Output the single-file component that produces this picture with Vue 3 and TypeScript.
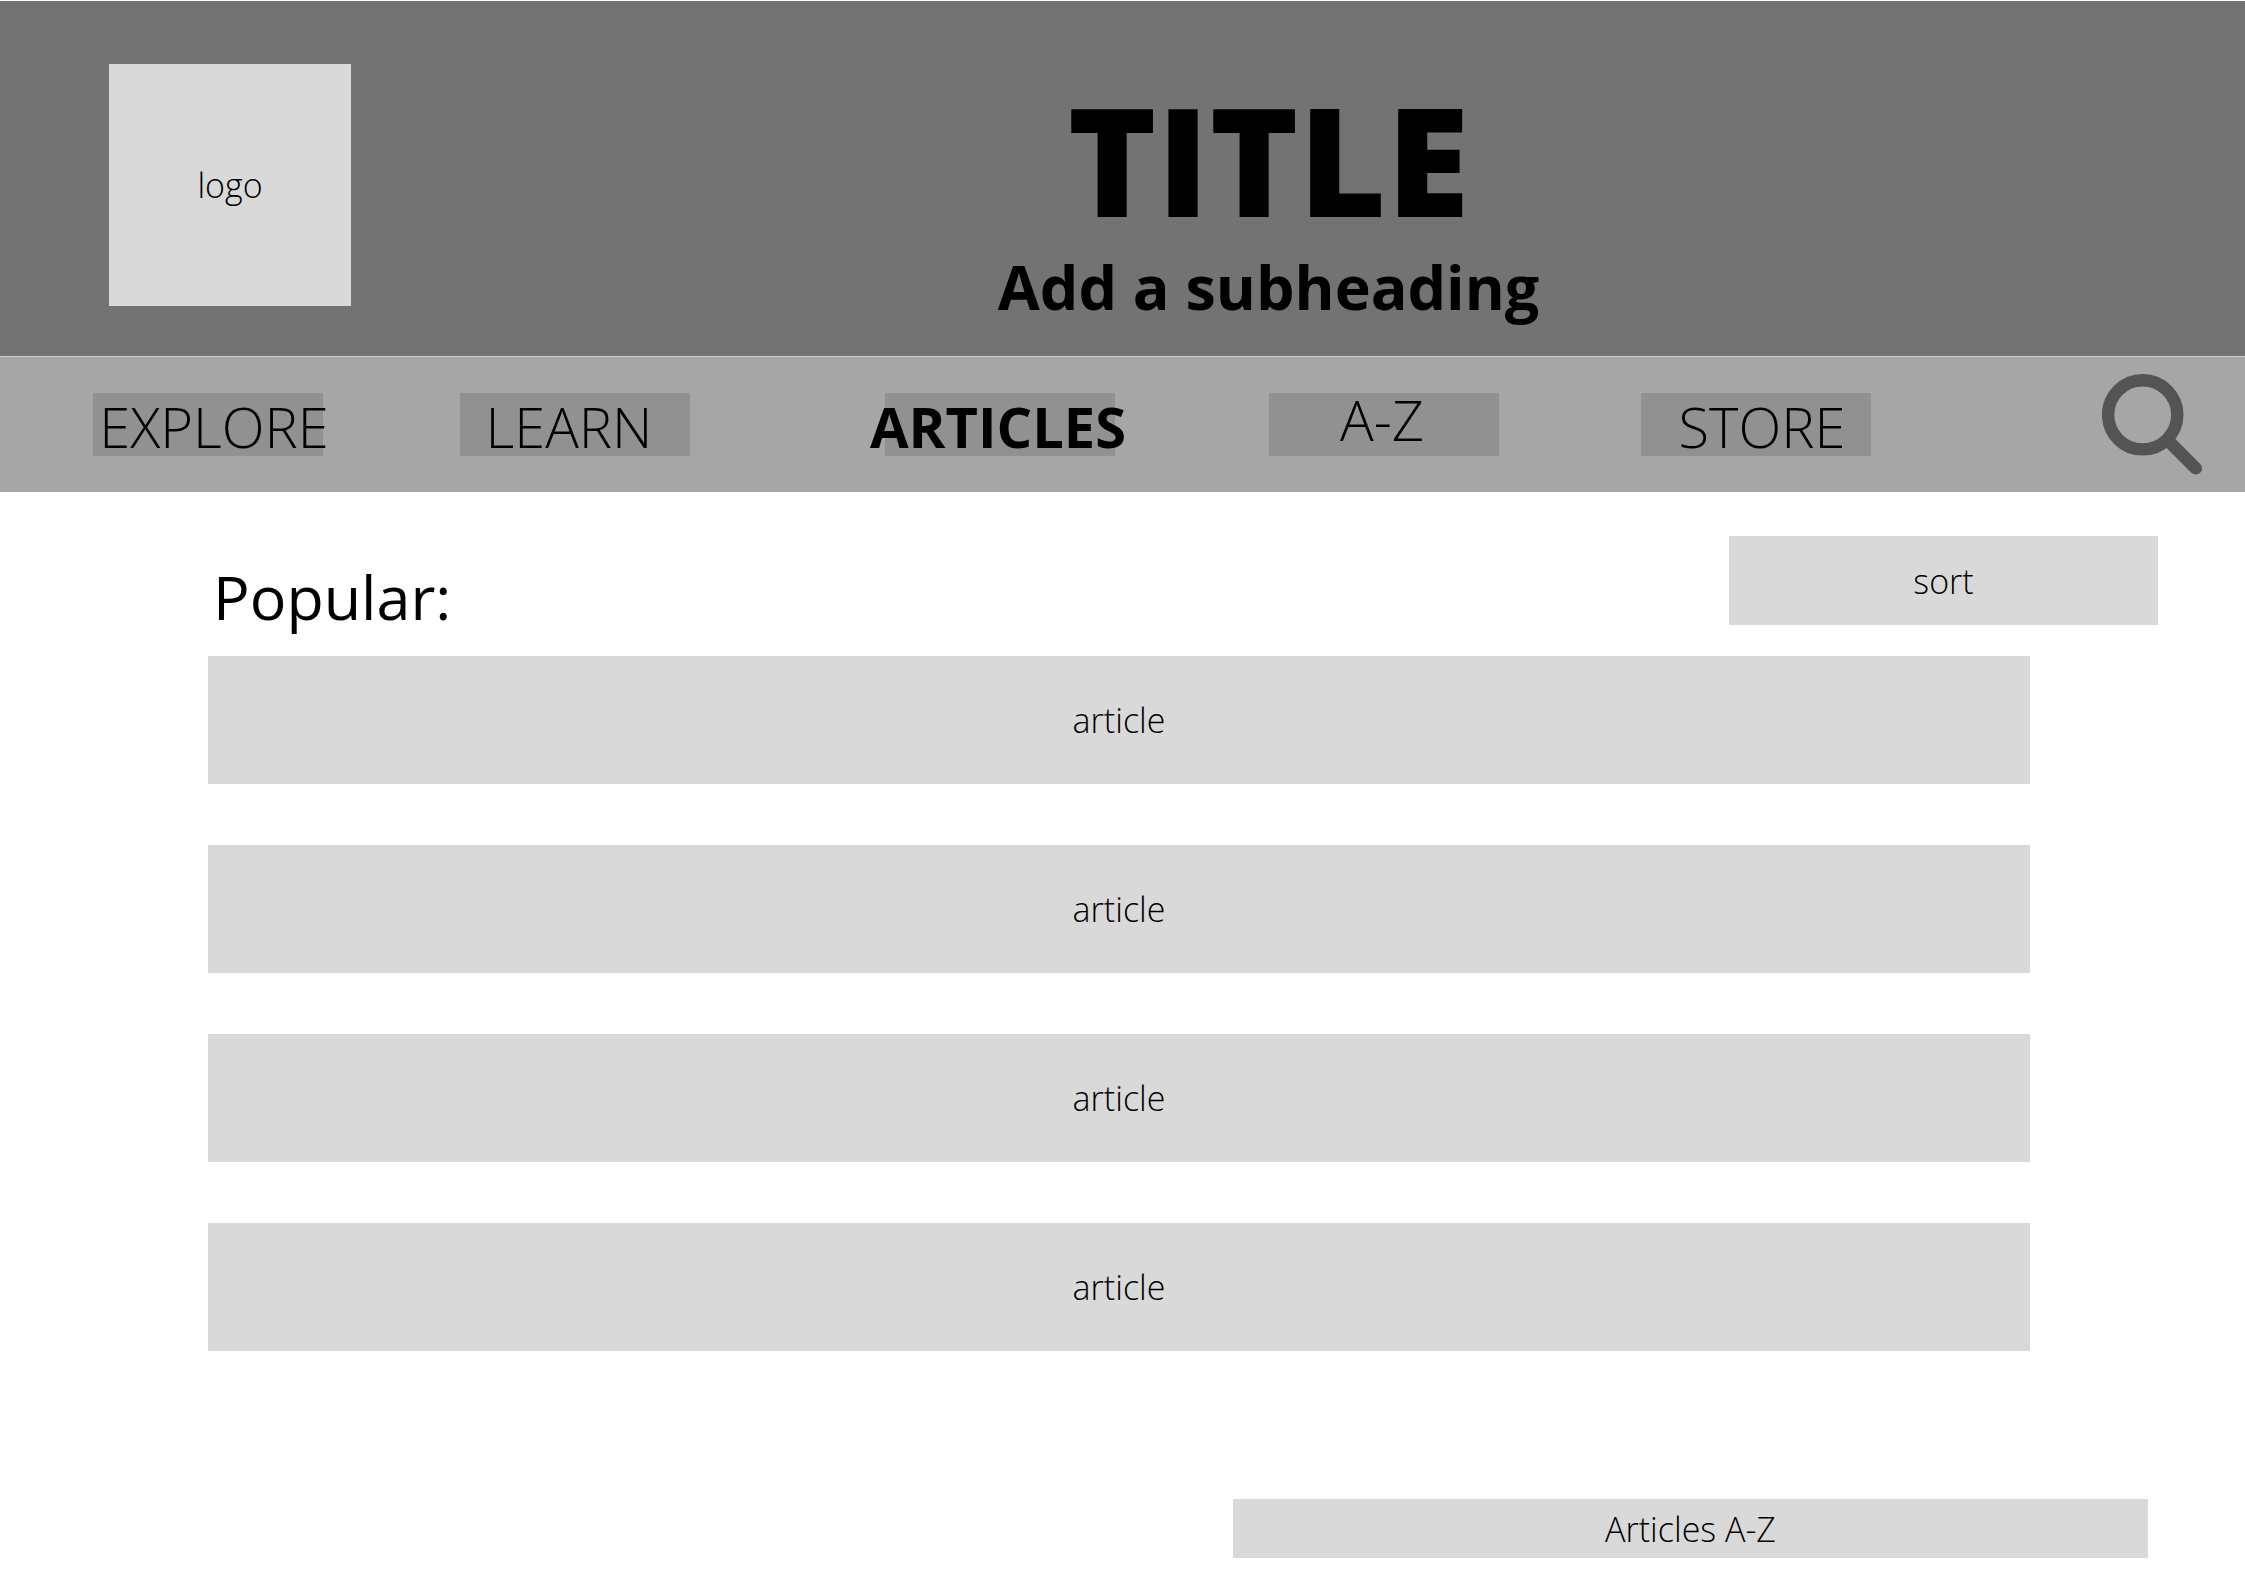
<script setup lang="ts">
interface NavItem {
  label: string
  href: string
  lean: 'left' | 'slight' | 'right'
  current?: boolean
  raised?: boolean
}

const navItems: NavItem[] = [
  { label: 'EXPLORE', href: '#explore', lean: 'right' },
  { label: 'LEARN', href: '#learn', lean: 'left' },
  { label: 'ARTICLES', href: '#articles', lean: 'slight', current: true },
  { label: 'A-Z', href: '#a-z', lean: 'slight', raised: true },
  { label: 'STORE', href: '#store', lean: 'right' },
]

const articles: string[] = ['article', 'article', 'article', 'article']
</script>

<template>
  <div class="page">
    <header class="masthead">
      <a class="logo" href="#home">logo</a>
      <div class="titles">
        <h1>TITLE</h1>
        <p>Add a subheading</p>
      </div>
    </header>

    <nav class="nav" aria-label="Main">
      <a
        v-for="item in navItems"
        :key="item.label"
        class="nav-item"
        :class="[`lean-${item.lean}`, { current: item.current, raised: item.raised }]"
        :href="item.href"
        :aria-current="item.current ? 'page' : undefined"
      >{{ item.label }}</a>
      <button class="search" type="button" aria-label="Search">
        <svg viewBox="0 0 102 102" width="102" height="102" fill="none" stroke="#545454" stroke-linecap="round">
          <circle cx="40.7" cy="40.8" r="34.6" stroke-width="12.4" />
          <path d="M67 67.5L93.8 94.4" stroke-width="12.4" />
        </svg>
      </button>
    </nav>

    <main>
      <div class="toolbar">
        <h2>Popular:</h2>
        <button class="sort" type="button">sort</button>
      </div>
      <ul class="list">
        <li v-for="(article, index) in articles" :key="index">
          <a class="card" href="#article">{{ article }}</a>
        </li>
      </ul>
    </main>

    <footer>
      <a class="index-link" href="#articles-a-z">Articles A-Z</a>
    </footer>
  </div>
</template>

<style>
body {
  margin: 0;
  background: #ffffff;
}
</style>

<style scoped>
.page {
  padding-top: 1px;
  font-family: "Open Sans", "Noto Sans", sans-serif;
  font-size: 34px;
  font-weight: 300;
  line-height: 48px;
  color: #000000;
}

.page * {
  box-sizing: border-box;
}

a {
  color: inherit;
  text-decoration: none;
}

button {
  border: 0;
  padding: 0;
  font: inherit;
  color: inherit;
  cursor: pointer;
}

.masthead {
  display: flex;
  align-items: flex-start;
  padding: 63px 59px 29px 109px;
  background: #737373;
}

.logo {
  display: flex;
  flex: none;
  align-items: center;
  justify-content: center;
  width: 242px;
  height: 242px;
  background: #d9d9d9;
}

.titles {
  flex: 1;
  padding-top: 19px;
  text-align: center;
}

h1 {
  margin: 0 0 12px;
  font-size: 151px;
  font-weight: 800;
  line-height: 152px;
}

.titles p {
  margin: 0;
  font-size: 61px;
  font-weight: 700;
  line-height: 80px;
}

.nav {
  display: grid;
  grid-template-columns: 367fr 425fr 384fr 372fr 461fr 143fr;
  align-items: start;
  padding: 17px 0 17px 93px;
  border-top: 1px solid #cccccc;
  background: #a6a6a6;
}

.nav-item {
  display: flex;
  align-items: center;
  justify-content: center;
  width: 230px;
  height: 63px;
  margin-top: 19px;
  padding-top: 2px;
  background: #919191;
  font-size: 56px;
  white-space: nowrap;
}

.lean-left {
  padding-right: 12px;
}

.lean-slight {
  padding-right: 4px;
}

.lean-right {
  padding-left: 12px;
}

.raised {
  align-items: flex-start;
}

.current {
  font-weight: 700;
}

.search {
  width: 102px;
  height: 101px;
  background: none;
}

.search svg {
  display: block;
}

.toolbar {
  display: flex;
  align-items: flex-end;
  justify-content: space-between;
  padding: 44px 87px 31px 213px;
}

h2 {
  margin: 0;
  font-size: 61px;
  font-weight: 400;
  line-height: 56px;
}

.sort {
  width: 429px;
  height: 89px;
  background: #d9d9d9;
}

.list {
  display: grid;
  gap: 61px;
  margin: 0;
  padding: 0 215px 0 208px;
  list-style: none;
}

.card {
  display: flex;
  align-items: center;
  justify-content: center;
  height: 128px;
  background: #d9d9d9;
}

footer {
  display: flex;
  justify-content: flex-end;
  padding: 148px 97px 29px;
}

.index-link {
  display: flex;
  align-items: center;
  justify-content: center;
  width: 915px;
  height: 59px;
  background: #d9d9d9;
}
</style>
